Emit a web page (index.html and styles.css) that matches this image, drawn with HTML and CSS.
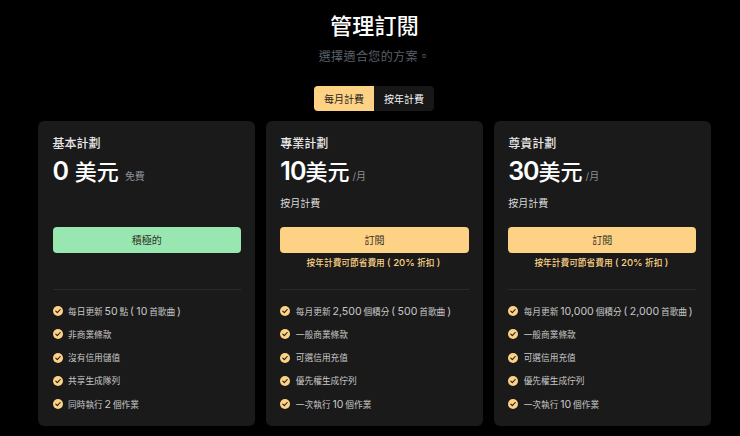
FILE: index.html
```html
<!DOCTYPE html>
<html lang="zh-Hant">
<head>
<meta charset="utf-8">
<title>管理訂閱</title>
<link rel="stylesheet" href="styles.css">
</head>
<body>
<svg class="defs" width="0" height="0" aria-hidden="true">
  <symbol id="check" viewBox="0 0 20 20">
    <circle cx="10" cy="10" r="10" fill="#fdd285"/>
    <path d="M5.6 10.4l3 3 5.8-6.4" fill="none" stroke="#1a1a1a" stroke-width="2.2" stroke-linecap="round" stroke-linejoin="round"/>
  </symbol>
</svg>
<main class="page">
  <header class="head">
    <h1 class="title">管理訂閱</h1>
    <p class="sub">選擇適合您的方案。</p>
    <div class="toggle">
      <span class="tab tab-on">每月計費</span>
      <span class="tab">按年計費</span>
    </div>
  </header>
  <section class="plans">
    <article class="card">
      <div class="top">
        <h2 class="name">基本計劃</h2>
        <div class="price"><span class="amount"><span class="n">0</span> 美元</span><span class="unit unit-free">免費</span></div>
        <p class="cycle"></p>
      </div>
      <button class="btn btn-active">積極的</button>
      <p class="save"></p>
      <hr class="rule">
      <ul class="feats">
        <li><svg class="ic"><use href="#check"/></svg><span>每日更新 <span class="n">50</span> 點 <span class="n">( 10</span> 首歌曲 <span class="n">)</span></span></li>
        <li><svg class="ic"><use href="#check"/></svg><span>非商業條款</span></li>
        <li><svg class="ic"><use href="#check"/></svg><span>沒有信用儲值</span></li>
        <li><svg class="ic"><use href="#check"/></svg><span>共享生成隊列</span></li>
        <li><svg class="ic"><use href="#check"/></svg><span>同時執行 <span class="n">2</span> 個作業</span></li>
      </ul>
    </article>
    <article class="card">
      <div class="top">
        <h2 class="name">專業計劃</h2>
        <div class="price"><span class="amount"><span class="n">10</span>美元</span><span class="unit">/月</span></div>
        <p class="cycle">按月計費</p>
      </div>
      <button class="btn">訂閱</button>
      <p class="save">按年計費可節省費用 <span class="n">( 20%</span> 折扣 <span class="n">)</span></p>
      <hr class="rule">
      <ul class="feats">
        <li><svg class="ic"><use href="#check"/></svg><span>每月更新 <span class="n">2,500</span> 個積分 <span class="n">( 500</span> 首歌曲 <span class="n">)</span></span></li>
        <li><svg class="ic"><use href="#check"/></svg><span>一般商業條款</span></li>
        <li><svg class="ic"><use href="#check"/></svg><span>可選信用充值</span></li>
        <li><svg class="ic"><use href="#check"/></svg><span>優先權生成佇列</span></li>
        <li><svg class="ic"><use href="#check"/></svg><span>一次執行 <span class="n">10</span> 個作業</span></li>
      </ul>
    </article>
    <article class="card">
      <div class="top">
        <h2 class="name">尊貴計劃</h2>
        <div class="price"><span class="amount"><span class="n">30</span>美元</span><span class="unit">/月</span></div>
        <p class="cycle">按月計費</p>
      </div>
      <button class="btn">訂閱</button>
      <p class="save">按年計費可節省費用 <span class="n">( 20%</span> 折扣 <span class="n">)</span></p>
      <hr class="rule">
      <ul class="feats">
        <li><svg class="ic"><use href="#check"/></svg><span>每月更新 <span class="n">10,000</span> 個積分 <span class="n">( 2,000</span> 首歌曲 <span class="n">)</span></span></li>
        <li><svg class="ic"><use href="#check"/></svg><span>一般商業條款</span></li>
        <li><svg class="ic"><use href="#check"/></svg><span>可選信用充值</span></li>
        <li><svg class="ic"><use href="#check"/></svg><span>優先權生成佇列</span></li>
        <li><svg class="ic"><use href="#check"/></svg><span>一次執行 <span class="n">10</span> 個作業</span></li>
      </ul>
    </article>
  </section>
</main>
</body>
</html>
```
FILE: styles.css
```css
* { box-sizing: border-box; }
html, body { margin: 0; height: 100%; background: #000; overflow: hidden; }
body { font-family: Inter, "Noto Sans CJK TC", sans-serif; color: #fff; }
.defs { position: absolute; }
.page { width: 673px; margin-left: 38px; padding-top: 11.5px; }
.head { display: flex; flex-direction: column; align-items: center; }
.title { margin: 0; font-size: 22px; line-height: 28px; font-weight: 500; letter-spacing: 0.2px; }
.sub { margin: 9px 0 0; font-size: 12px; line-height: 16px; color: #5a606a; letter-spacing: 0.4px; }
.toggle { display: flex; margin-top: 21.5px; margin-right: 1px; background: #171717; border-radius: 4px; height: 25px; }
.tab { width: 60px; display: flex; align-items: center; justify-content: center; font-size: 10px; color: #f2f2f2; border-radius: 4px; }
.tab-on { background: #fdd285; color: #27241d; border-radius: 4px 0 0 4px; }
.plans { display: grid; grid-template-columns: repeat(3, 1fr); gap: 10.5px; margin-top: 10px; }
.card { background: #1a1a1a; border-radius: 6px; padding: 15px 14.5px 0; height: 305px; }
.top { height: 91px; }
.name { margin: 0; font-size: 12px; line-height: 16px; font-weight: 500; color: #e6e6e6; }
.price { display: flex; align-items: baseline; margin-top: 5px; height: 29px; }
.amount { font-size: 22px; line-height: 29px; font-weight: 500; color: #fff; word-spacing: 1px; }
.amount .n { font-size: 25px; font-weight: 600; letter-spacing: -1px; }
.unit { font-size: 10px; margin-left: 3px; color: #8a8f98; }
.unit-free { margin-left: 6px; }
.cycle { margin: 10px 0 0; font-size: 10px; line-height: 14px; color: #d8d8d8; }
.btn { display: block; width: 100%; height: 25.5px; border: 0; border-radius: 4px; background: #fdd285; color: #33302a; font: inherit; font-size: 10px; padding: 0; }
.btn-active { background: #98e6b0; }
.save { margin: 3.5px 0 0; padding-right: 2px; height: 14px; font-size: 8.7px; line-height: 14px; font-weight: 500; text-align: center; color: #fdd285; }
.save .n { font-size: 9.6px; }
.rule { margin: 18.5px 0 0; border: 0; height: 1px; background: #2a2a2a; }
.feats { list-style: none; margin: 14.5px 0 0; padding: 0; display: flex; flex-direction: column; gap: 9.25px; }
.feats li { display: flex; align-items: center; height: 14px; font-size: 8.7px; color: #c8c8c8; white-space: nowrap; word-spacing: -0.6px; }
.feats .n { font-size: 10.6px; }
.ic { width: 10px; height: 10px; margin-right: 5.5px; flex: none; }
```
